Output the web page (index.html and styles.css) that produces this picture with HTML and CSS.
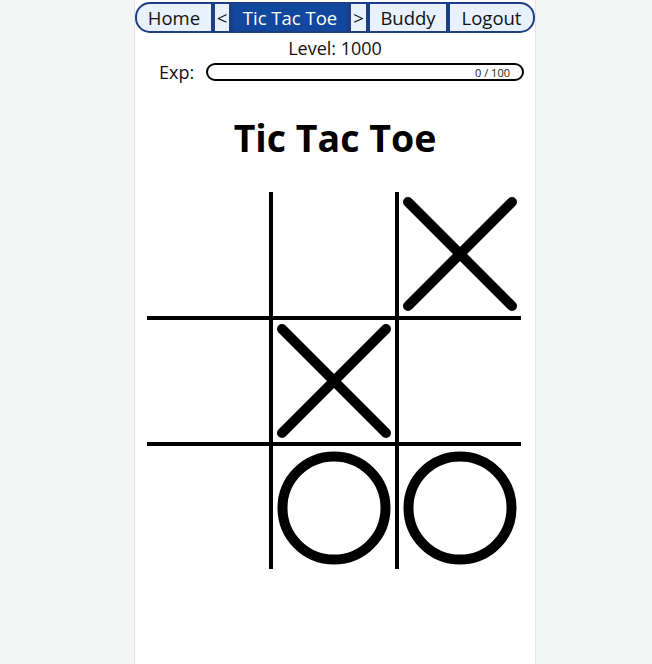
FILE: index.html
```html
<!DOCTYPE html>
<html lang="en">
<head>
<meta charset="utf-8">
<title>Tic Tac Toe</title>
<link rel="stylesheet" href="styles.css">
</head>
<body>
<div class="panel">
  <nav class="nav">
    <a class="nav-item nav-first" href="#">Home</a>
    <a class="nav-item nav-arrow" href="#">&lt;</a>
    <a class="nav-item nav-active" href="#">Tic Tac Toe</a>
    <a class="nav-item nav-arrow" href="#">&gt;</a>
    <a class="nav-item" href="#">Buddy</a>
    <a class="nav-item nav-last" href="#">Logout</a>
  </nav>
  <div class="level">Level: 1000</div>
  <div class="exp-row">
    <span class="exp-label">Exp:</span>
    <div class="exp-bar"><span class="exp-text">0 / 100</span></div>
  </div>
  <h1 class="title">Tic Tac Toe</h1>
  <div class="board">
    <div class="cell"></div>
    <div class="cell"></div>
    <div class="cell"><svg class="mark" viewBox="0 0 122 122"><line x1="9" y1="9" x2="113" y2="113"/><line x1="113" y1="9" x2="9" y2="113"/></svg></div>
    <div class="cell"></div>
    <div class="cell"><svg class="mark" viewBox="0 0 122 122"><line x1="9" y1="9" x2="113" y2="113"/><line x1="113" y1="9" x2="9" y2="113"/></svg></div>
    <div class="cell"></div>
    <div class="cell"></div>
    <div class="cell"><svg class="mark" viewBox="0 0 122 122"><circle cx="61" cy="61" r="51.5"/></svg></div>
    <div class="cell"><svg class="mark" viewBox="0 0 122 122"><circle cx="61" cy="61" r="51.5"/></svg></div>
  </div>
</div>
</body>
</html>
```

FILE: styles.css
```css
html, body {
  margin: 0;
  padding: 0;
  height: 100%;
}
body {
  background: #f4f6f6;
  font-family: "Open Sans", "Noto Sans", sans-serif;
  color: #111;
  display: flex;
  justify-content: center;
  padding-left: 18px;
  box-sizing: border-box;
}
.panel {
  width: 400px;
  min-height: 100%;
  background: #fff;
  box-shadow: 0 0 0 1px #e3e5e5;
  padding-top: 2px;
  box-sizing: border-box;
  display: flex;
  flex-direction: column;
}
.nav {
  display: grid;
  grid-template-columns: 74px 14px 114px 15px 76px 1fr;
  gap: 4px;
  height: 31px;
  padding: 2px;
  box-sizing: border-box;
  background: #1c3f84;
  border-radius: 15px;
}
.nav-item {
  display: flex;
  align-items: center;
  justify-content: center;
  padding-top: 2px;
  background: #e8f1fd;
  color: #111;
  text-decoration: none;
  font-size: 18.5px;
  line-height: 1;
  white-space: nowrap;
}
.nav-first {
  border-radius: 13px 0 0 13px;
}
.nav-last {
  border-radius: 0 13px 13px 0;
}
.nav-active {
  background: #11479c;
  color: #fff;
}
.level {
  margin-top: 3px;
  text-align: center;
  font-size: 18px;
  line-height: 24px;
}
.exp-row {
  display: flex;
  align-items: center;
  margin-top: 3px;
  padding-left: 24px;
  height: 18px;
}
.exp-label {
  font-size: 18px;
  width: 47px;
}
.exp-bar {
  width: 318px;
  height: 18px;
  box-sizing: border-box;
  border: 2px solid #000;
  border-radius: 9px;
  display: flex;
  align-items: center;
  justify-content: flex-end;
  padding-right: 12px;
}
.exp-text {
  font-size: 11px;
  color: #222;
}
.title {
  margin: 35px 0 0;
  text-align: center;
  font-size: 37.5px;
  line-height: 44px;
  font-weight: 700;
  color: #000;
}
.board {
  margin: 32px 0 0 12px;
  display: grid;
  grid-template-columns: repeat(3, 122px);
  grid-template-rows: 124px 122px 123px;
  gap: 4px;
  background: #000;
  width: max-content;
}
.cell {
  background: #fff;
  display: flex;
}
.mark {
  width: 122px;
  height: 122px;
  margin: auto;
  fill: none;
  stroke: #000;
  stroke-width: 10;
  stroke-linecap: round;
}
```
